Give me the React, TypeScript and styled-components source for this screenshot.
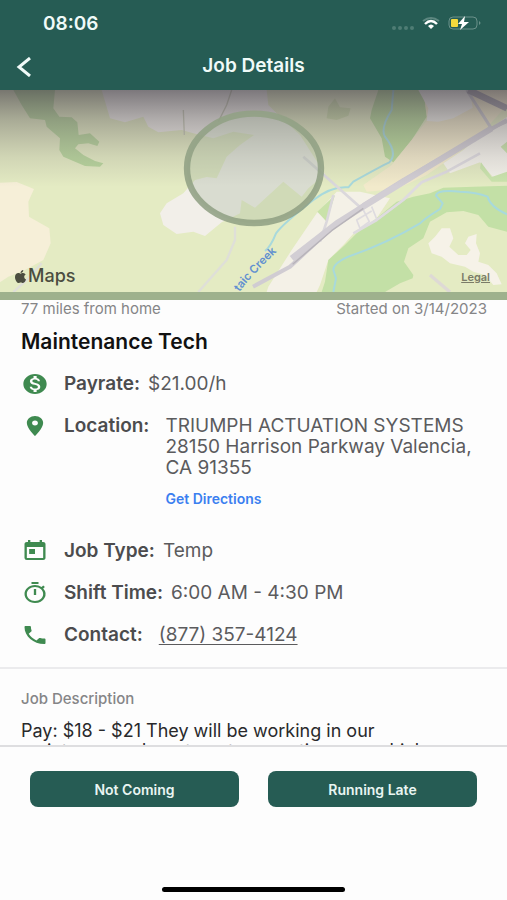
import React from "react";
import styled, { createGlobalStyle } from "styled-components";
import {
  MdMonetizationOn,
  MdLocationOn,
  MdToday,
  MdOutlineTimer,
  MdPhone,
} from "react-icons/md";
import { FaApple } from "react-icons/fa";

const GlobalStyle = createGlobalStyle`
  * { box-sizing: border-box; }
  body { margin: 0; background: #fdfdfd; }
  body, button { font-family: Inter, "Liberation Sans", sans-serif; }
`;

const Screen = styled.div`
  display: flex;
  flex-direction: column;
  height: 100vh;
  color: #4c4c4e;
`;

const Header = styled.header`
  flex: none;
  background: #265c54;
  color: #f0faf8;
`;

const StatusBar = styled.div`
  display: flex;
  align-items: center;
  justify-content: space-between;
  height: 46px;
  padding: 0 26px 0 43px;
`;

const Clock = styled.span`
  font-size: 19px;
  font-weight: 600;
`;

const StatusIcons = styled.div`
  display: flex;
  align-items: center;
  gap: 8px;
`;

const NavBar = styled.div`
  display: grid;
  grid-template-columns: 48px 1fr 48px;
  align-items: center;
  height: 44px;
  padding-bottom: 4px;
`;

const BackButton = styled.button`
  display: flex;
  padding: 2px 0 0 16px;
  border: 0;
  background: none;
  color: inherit;
`;

const Title = styled.h1`
  margin: 0;
  font-size: 19px;
  line-height: 24px;
  font-weight: 600;
  text-align: center;
`;

const Scroller = styled.main`
  flex: 1;
  min-height: 0;
  overflow: hidden;
`;

const MapPanel = styled.section`
  position: relative;
  height: 210px;
  overflow: hidden;
  border-bottom: 8px solid #9eb18d;
`;

const MapDrawing = styled.svg`
  display: block;
  width: 100%;
  height: 100%;
`;

const MapBrand = styled.div`
  position: absolute;
  left: 13px;
  bottom: 6px;
  display: flex;
  align-items: center;
  color: #4b4d40;
  font-size: 18px;
  line-height: 20px;
  font-weight: 500;
`;

const LegalLink = styled.a`
  position: absolute;
  right: 17px;
  bottom: 8px;
  color: #7b7c68;
  font-size: 11px;
  line-height: 14px;
  font-weight: 600;
`;

const Meta = styled.div`
  display: flex;
  justify-content: space-between;
  padding: 0 20px 0 21px;
  color: #858587;
  font-size: 15px;
  line-height: 18px;
`;

const JobTitle = styled.h2`
  margin: 12px 21px 19px;
  color: #111;
  font-size: 21px;
  line-height: 24px;
  font-weight: 600;
`;

const Details = styled.dl`
  display: flex;
  flex-direction: column;
  gap: 21px;
  margin: 0;
  padding: 0 21px 22px;
  font-size: 19px;
  line-height: 21px;
`;

const Row = styled.div<{ $gap?: number }>`
  display: flex;
  align-items: flex-start;
  column-gap: ${(p) => p.$gap ?? 8}px;
`;

const Label = styled.dt`
  display: flex;
  align-items: center;
  gap: 15px;
  font-weight: 600;
  white-space: nowrap;

  svg {
    width: 28px;
    height: 24px;
    margin: -2px 0;
    color: #3f8a50;
  }
`;

const Value = styled.dd`
  flex: 1;
  margin: 0;
  color: #5b5b5d;
`;

const PhoneLink = styled.a`
  color: inherit;
  text-underline-offset: 3px;
`;

const DirectionsLink = styled.a`
  display: block;
  margin: 12px 0 11px;
  color: #3b7ff0;
  font-size: 14px;
  line-height: 18px;
  font-weight: 600;
  text-decoration: none;
`;

const Description = styled.section`
  padding: 21px 21px 0;
  border-top: 2px solid #ebebed;
`;

const DescriptionHeading = styled.h3`
  margin: 0 0 13px;
  color: #858587;
  font-size: 15px;
  line-height: 18px;
  font-weight: 500;
`;

const DescriptionText = styled.p`
  margin: 0;
  color: #29292b;
  font-size: 18px;
  line-height: 20px;
`;

const Footer = styled.footer`
  flex: none;
  border-top: 2px solid #dedee0;
  background: #fdfdfd;
`;

const Actions = styled.div`
  display: grid;
  grid-template-columns: 1fr 1fr;
  gap: 29px;
  padding: 24px 30px 80px;
`;

const ActionButton = styled.button`
  height: 36px;
  border: 0;
  border-radius: 8px;
  background: #265c54;
  color: #e9f5f2;
  font-size: 14px;
  font-weight: 600;
`;

const HomeIndicator = styled.div`
  width: 36%;
  height: 5px;
  margin: 0 auto 8px;
  border-radius: 3px;
  background: #000;
`;

function StatusGlyphs() {
  return (
    <StatusIcons>
      <svg width="22" height="18" viewBox="0 0 22 18" fill="#4f7c74">
        <circle cx="2" cy="14" r="2" />
        <circle cx="8" cy="14" r="2" />
        <circle cx="14" cy="14" r="2" />
        <circle cx="20" cy="14" r="2" />
      </svg>
      <svg width="18" height="14" viewBox="0 0 18 14" fill="none">
        <path d="M1 5Q9-1 17 5" stroke="#5d8780" strokeWidth="2" />
        <path d="M3 8Q9 2 15 8" stroke="#fff" strokeWidth="2.4" />
        <path d="M6 10Q9 7 12 10L9 13Z" fill="#fff" />
      </svg>
      <svg width="33" height="16" viewBox="0 0 33 16">
        <rect x="1" y="2" width="28" height="12" rx="4" fill="none" stroke="#6b918a" />
        <path d="M31 6q3 2 0 4z" fill="#6b918a" />
        <rect x="3" y="4" width="7" height="8" rx="1" fill="#f5d93c" />
        <path d="M17 1L10 9H14L12 15L21 7H16Z" fill="#fff" />
      </svg>
    </StatusIcons>
  );
}

function AreaMap() {
  return (
    <MapDrawing viewBox="0 15 1521 606" preserveAspectRatio="xMidYMid slice" role="img" aria-label="Area map">
      <defs>
        <linearGradient id="shade" x1="0" y1="0" x2="0" y2="1">
          <stop offset="0" stopColor="#443f48" stopOpacity=".68" />
          <stop offset=".3" stopColor="#544f55" stopOpacity=".42" />
          <stop offset=".7" stopColor="#665f66" stopOpacity=".15" />
          <stop offset="1" stopColor="#665f66" stopOpacity="0" />
        </linearGradient>
        <path id="creek" d="M712 616Q745 570 840 480" />
      </defs>
      <rect y="15" width="1521" height="606" fill="#e4ebc3" />
      <path d="M40 15H165L160 70L178 95L215 97L232 112L236 150L270 145L298 170L292 183L265 175L235 178L225 190L250 210L285 228L310 235L300 245L255 243L190 215L178 195L180 160L140 125L135 105L90 100L65 60Z" fill="#b9d69d" />
      <path d="M305 15H800L805 60L835 90L900 150L975 268L925 310L905 335L850 290L765 368L725 345L720 385L690 400L665 412L615 453L580 440L530 447L490 420L480 385L500 355L550 325L585 285L620 276L650 280L680 215L720 180L762 150L700 140L640 160L580 145L545 135L475 142L445 125L430 95L375 112L330 100Z" fill="#f2efe9" />
      <path d="M0 293L50 291L102 312L85 350L87 395L148 430L152 475L130 525L75 555L25 575L0 592Z" fill="#f6efd8" />
      <path d="M1135 15H1270L1280 95L1235 165L1180 232L1155 215L1145 160L1110 100L1115 75Z" fill="#b9d99b" />
      <path d="M985 65L1005 40L1020 67L1052 70L1045 92L1010 105L980 100Z" fill="#d0dfad" />
      <path d="M1270 15H1521V60L1450 140L1380 200L1280 270L1190 312L1100 320L1090 300L1175 240L1235 165L1282 105Z" fill="#f2eacb" />
      <path d="M1255 15H1410L1418 68L1360 100L1315 110L1280 108L1285 70Z" fill="#f2f0e9" />
      <path d="M1521 95L1440 152L1390 195L1330 235L1350 265L1440 232L1482 280L1521 270Z" fill="#f4f2ea" />
      <path d="M1443 232L1475 276L1521 260V290L1475 290L1440 250ZM1502 185L1521 170V205Z" fill="#cbe5ad" />
      <path d="M805 605L875 495L950 385L1010 320L1080 320L1170 340L1120 415L1070 435L1030 480L985 525L960 600L950 621H800Z" fill="#f4f1e7" />
      <path d="M952 380L1005 330L980 410Z" fill="#c9e2a9" />
      <path d="M1521 302L1420 305L1330 308L1290 325L1240 335L1190 350L1130 400L1070 445L1035 480L985 525L975 590L965 621H1155L1200 595L1238 580L1240 570L1212 530L1225 490L1270 460L1290 410L1340 382L1390 378L1435 390L1465 425L1521 440Z" fill="#c3e0a6" />
      <path d="M1305 455L1325 430L1350 430L1360 460L1348 485L1375 510L1400 510L1412 495L1395 475L1405 455L1430 447L1428 475L1440 505L1435 530L1465 540L1490 565L1505 598L1480 600L1455 570L1420 560L1395 545L1350 535L1325 515L1295 505L1285 475Z" fill="#f6f2e8" />
      <g fill="none" strokeLinejoin="round">
        <path d="M705 425L705 465L680 525L595 621M125 535L85 580L40 621" stroke="#dfdfd8" strokeWidth="7" />
        <path d="M695 15L680 60L655 110M550 75L553 150" stroke="#c9cbb7" strokeWidth="4" />
        <path d="M1180 15L1175 75Q1140 130 1155 155Q1195 205 1168 232Q1140 245 1060 290L1045 307Q995 302 940 345Q850 415 828 445Q812 485 795 498" stroke="#a8d9dc" strokeWidth="6" />
        <path d="M1521 388Q1470 365 1463 335Q1430 322 1380 320Q1310 313 1308 332L1328 355L1320 372Q1275 400 1260 415Q1160 475 1045 515Q1000 535 1000 555L1008 580L1000 621" stroke="#a8d9dc" strokeWidth="6" />
        <path d="M910 215L1090 375M1000 330L980 410L960 470" stroke="#dbd8dc" strokeWidth="8" />
        <path d="M1060 445L1130 405L1210 345L1265 292L1340 260L1440 205" stroke="#dedbdf" strokeWidth="8" />
        <path d="M1115 365L1130 402M1090 375L1108 410L1080 430L1070 405L1115 378" stroke="#dedbdf" strokeWidth="5" />
        <path d="M1400 15L1474 130L1521 110" stroke="#cfccd0" strokeWidth="9" />
        <path d="M759 605L870 545L995 430L1090 360L1210 285L1521 105" stroke="#d0ccd2" strokeWidth="12" />
        <path d="M875 520L1010 415L1090 365L1285 245L1475 130" stroke="#d2ced4" strokeWidth="18" />
        <path d="M878 538L995 437L1090 370" stroke="#b7b3b9" strokeWidth="4" />
        <path d="M1405 15L1521 70" stroke="#a8a4ac" strokeWidth="20" />
        <path d="M1290 570L1350 621" stroke="#ded9d5" strokeWidth="10" />
      </g>
      <text fill="#6190d0" fontSize="34" fontWeight="600" dy="8">
        <textPath href="#creek">taic Creek</textPath>
      </text>
      <rect y="15" width="1521" height="290" fill="url(#shade)" />
      <ellipse cx="762" cy="250" rx="201" ry="164" fill="#a9b8a0" fillOpacity=".34" stroke="#91a184" strokeOpacity=".88" strokeWidth="19" />
    </MapDrawing>
  );
}

export default function App() {
  return (
    <>
      <GlobalStyle />
      <Screen>
        <Header>
          <StatusBar>
            <Clock>08:06</Clock>
            <StatusGlyphs />
          </StatusBar>
          <NavBar>
            <BackButton aria-label="Back">
              <svg width="16" height="20" viewBox="0 0 16 20" fill="none" stroke="currentColor" strokeWidth="3">
                <path d="M14 1L3 10L14 19" />
              </svg>
            </BackButton>
            <Title>Job Details</Title>
          </NavBar>
        </Header>

        <Scroller>
          <MapPanel>
            <AreaMap />
            <MapBrand>
              <FaApple size={15} />
              Maps
            </MapBrand>
            <LegalLink href="#legal">Legal</LegalLink>
          </MapPanel>

          <Meta>
            <span>77 miles from home</span>
            <span>Started on 3/14/2023</span>
          </Meta>
          <JobTitle>Maintenance Tech</JobTitle>

          <Details>
            <Row>
              <Label>
                <MdMonetizationOn preserveAspectRatio="none" />
                Payrate:
              </Label>
              <Value>$21.00/h</Value>
            </Row>
            <Row $gap={16}>
              <Label>
                <MdLocationOn preserveAspectRatio="none" />
                Location:
              </Label>
              <Value>
                TRIUMPH ACTUATION SYSTEMS
                <br />
                28150 Harrison Parkway Valencia, CA 91355
                <DirectionsLink href="#directions">Get Directions</DirectionsLink>
              </Value>
            </Row>
            <Row>
              <Label>
                <MdToday preserveAspectRatio="none" />
                Job Type:
              </Label>
              <Value>Temp</Value>
            </Row>
            <Row>
              <Label>
                <MdOutlineTimer preserveAspectRatio="none" />
                Shift Time:
              </Label>
              <Value>6:00 AM - 4:30 PM</Value>
            </Row>
            <Row $gap={16}>
              <Label>
                <MdPhone preserveAspectRatio="none" />
                Contact:
              </Label>
              <Value>
                <PhoneLink href="tel:8773574124">(877) 357-4124</PhoneLink>
              </Value>
            </Row>
          </Details>

          <Description>
            <DescriptionHeading>Job Description</DescriptionHeading>
            <DescriptionText>
              Pay: $18 - $21 They will be working in our
              <br />
              maintenance department supporting our vehicle
            </DescriptionText>
          </Description>
        </Scroller>

        <Footer>
          <Actions>
            <ActionButton>Not Coming</ActionButton>
            <ActionButton>Running Late</ActionButton>
          </Actions>
          <HomeIndicator />
        </Footer>
      </Screen>
    </>
  );
}
